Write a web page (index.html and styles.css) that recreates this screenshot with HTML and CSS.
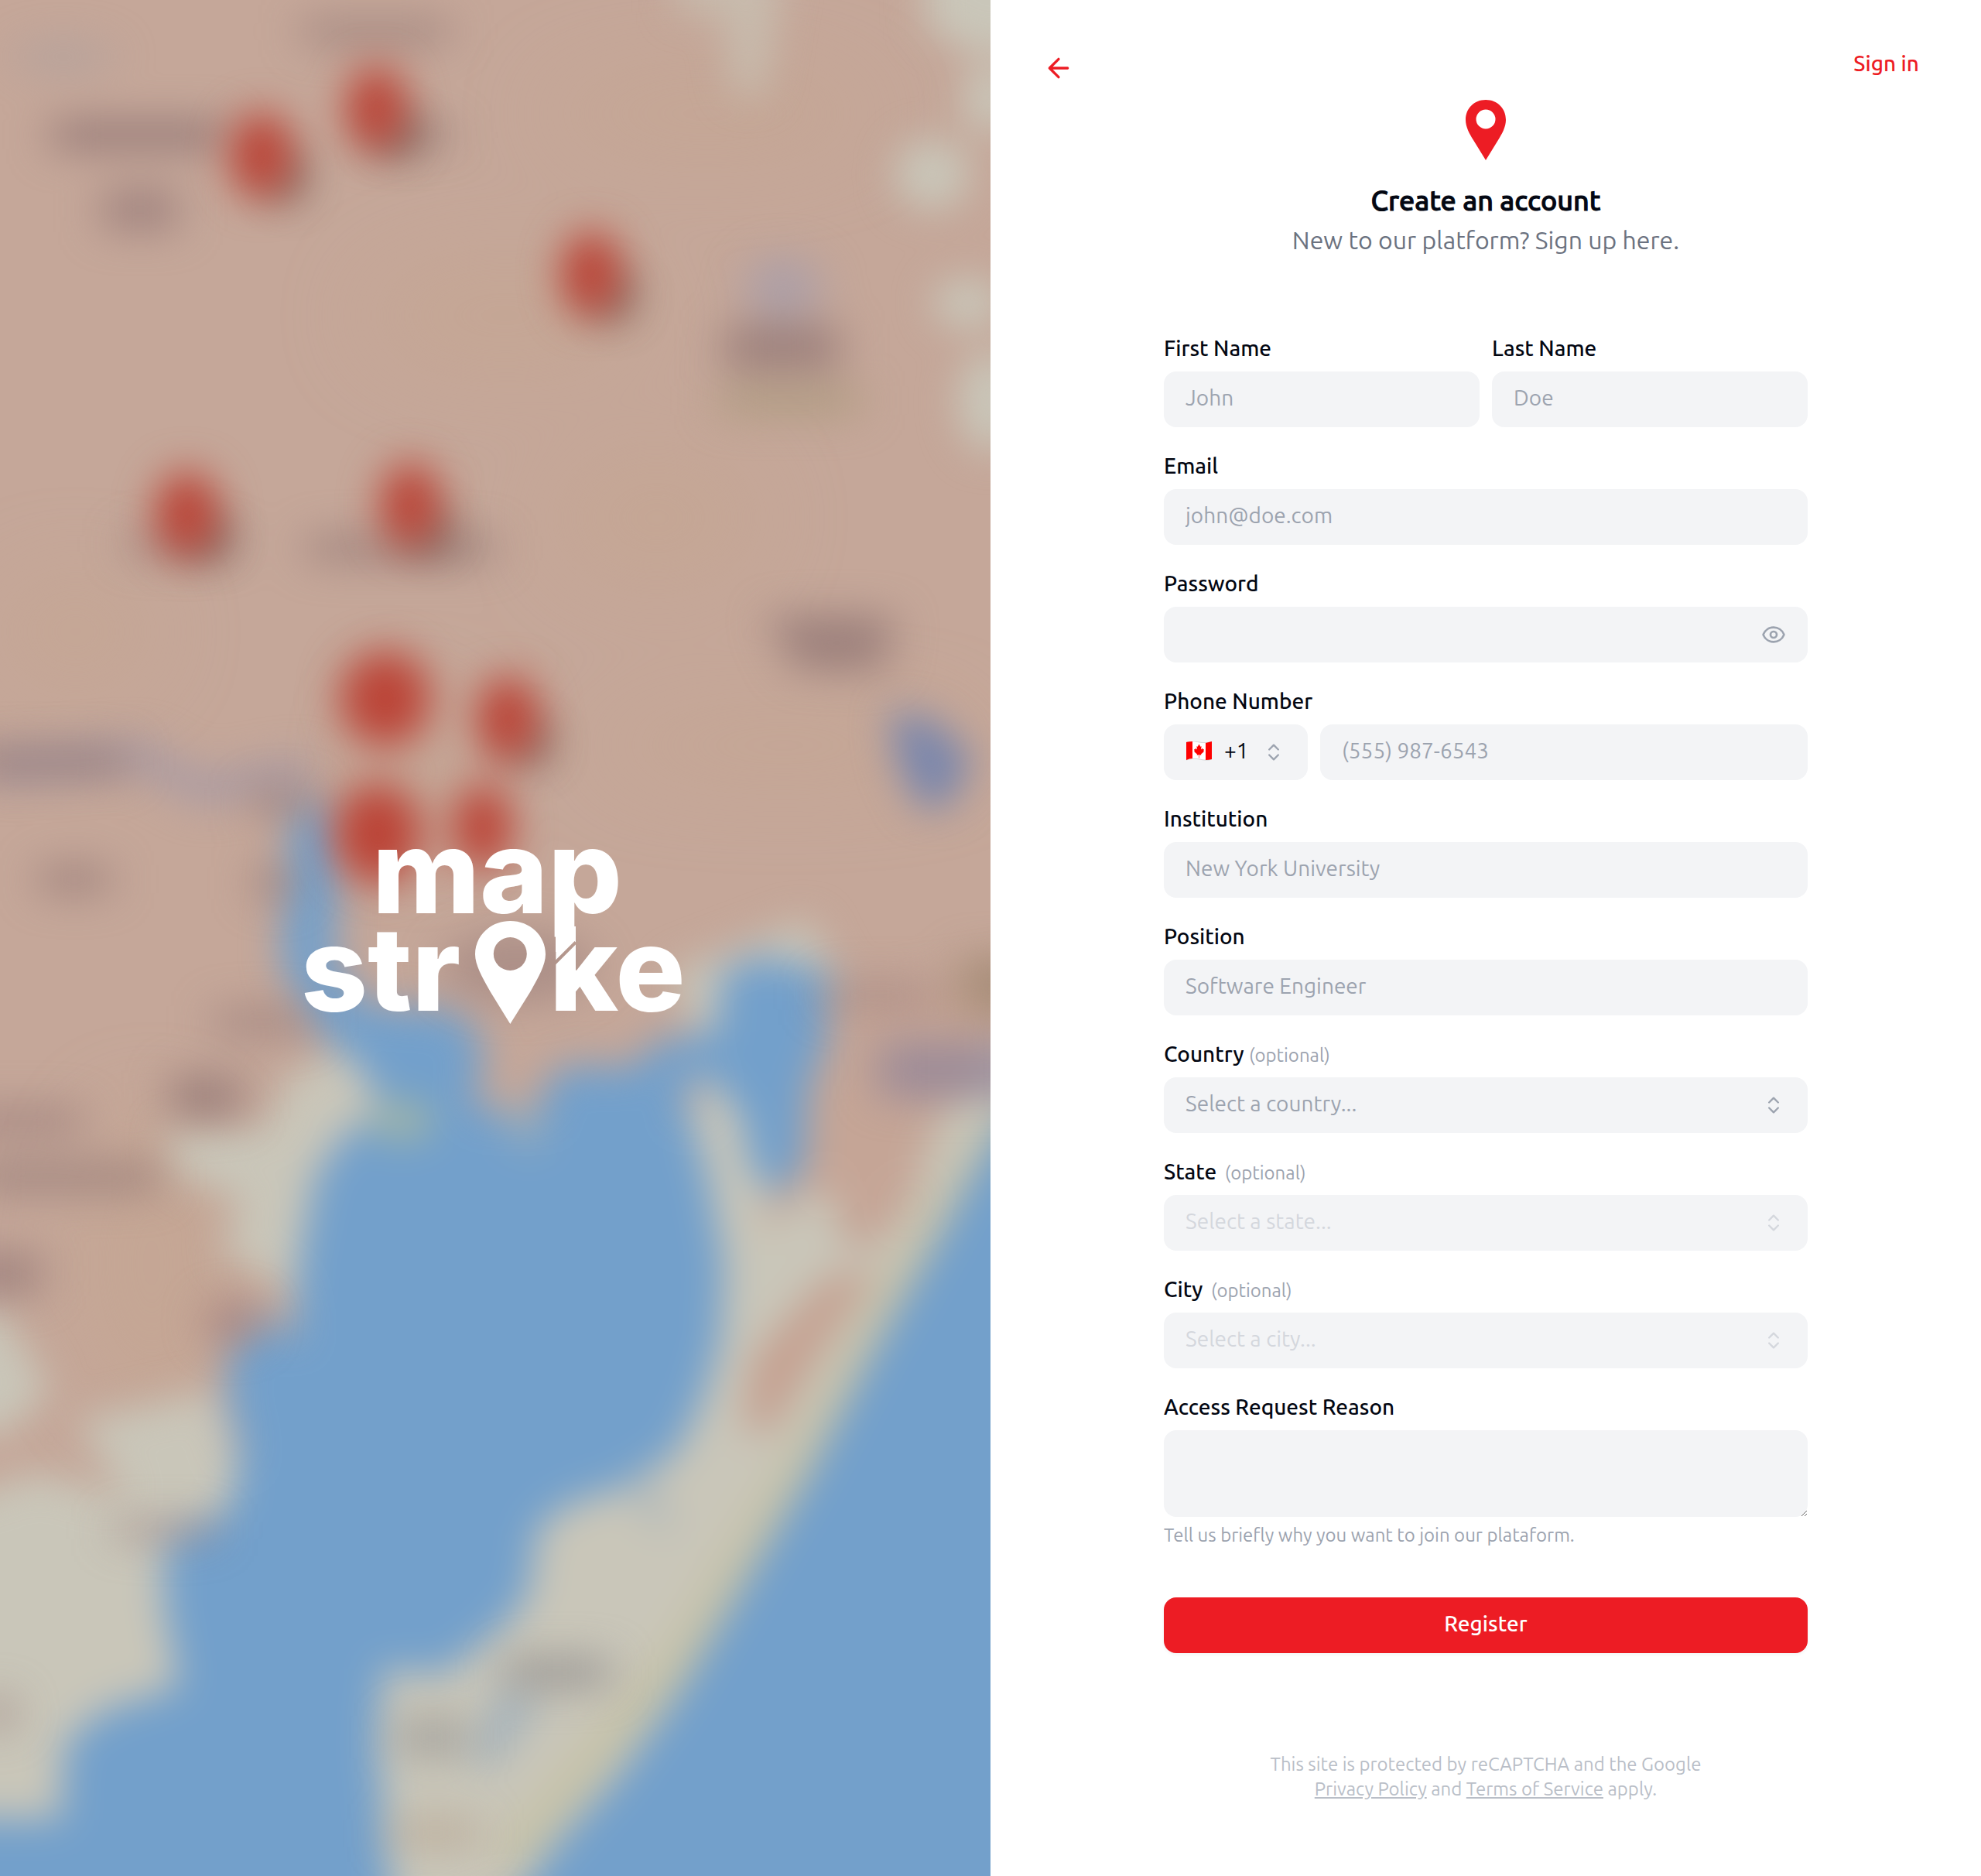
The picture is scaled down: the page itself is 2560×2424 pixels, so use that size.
FILE: index.html
```html
<!DOCTYPE html>
<html lang="en">
<head>
<meta charset="utf-8">
<meta name="viewport" content="width=device-width, initial-scale=1">
<title>Create an account</title>
<link rel="stylesheet" href="styles.css">
</head>
<body>
<div class="page">
  <aside class="hero">
    <svg class="map" viewBox="0 0 784 1485" preserveAspectRatio="xMidYMid slice" aria-hidden="true">
      <defs>
        <filter id="soft" color-interpolation-filters="sRGB" filterUnits="userSpaceOnUse" x="-60" y="-60" width="904" height="1605"><feGaussianBlur stdDeviation="15"/></filter>
        <filter id="label" color-interpolation-filters="sRGB" filterUnits="userSpaceOnUse" x="-60" y="-60" width="904" height="1605"><feGaussianBlur stdDeviation="17 15"/></filter>
        <filter id="pin" color-interpolation-filters="sRGB" filterUnits="userSpaceOnUse" x="-60" y="-60" width="904" height="1605"><feGaussianBlur stdDeviation="16"/></filter>
        <filter id="wide" color-interpolation-filters="sRGB" filterUnits="userSpaceOnUse" x="-60" y="-60" width="904" height="1605"><feGaussianBlur stdDeviation="36"/></filter>
      </defs>
      <rect x="-60" y="-60" width="904" height="1605" fill="#c5a799"/>
      <g filter="url(#wide)" fill="#c5a690" opacity=".5">
        <ellipse cx="400" cy="250" rx="110" ry="40"/><ellipse cx="560" cy="90" rx="130" ry="30"/><ellipse cx="520" cy="410" rx="80" ry="50"/>
        <ellipse cx="60" cy="500" rx="60" ry="40"/><ellipse cx="620" cy="590" rx="150" ry="24"/><ellipse cx="120" cy="1000" rx="60" ry="120"/>
        <ellipse cx="330" cy="610" rx="30" ry="60"/>
      </g>
      <g filter="url(#soft)">
        <!-- marsh and beaches -->
        <g fill="#c9c6b9">
          <path d="M732-60H850V42H765L732 20Z"/><ellipse cx="784" cy="78" rx="22" ry="28"/><ellipse cx="738" cy="138" rx="30" ry="28"/>
          <ellipse cx="766" cy="240" rx="28" ry="20"/><ellipse cx="784" cy="318" rx="26" ry="40"/>
          <path d="M535-30H622L605 76H580L572 10H535Z" opacity=".65"/>
          <path d="M225 855L275 825 330 870 310 920 260 1000 240 1080 225 1020 175 990 190 950 140 930 130 895 210 892Z"/>
          <path d="M-60 1035H0L40 1100 5 1135H-60Z"/>
          <path d="M60 1125L170 1100 200 1200 190 1360 20 1500H-60V1195L30 1165 100 1185Z"/>
          <path d="M530 770L640 728 672 790 655 850 640 950 575 1010 545 900 560 840Z"/>
          <path d="M784 830L844 830V900L720 1040 600 1270 440 1485 300 1545 290 1300 440 1170 560 1050 580 930 640 930 670 950 720 960 740 870Z"/>
        </g>
        <path d="M655 790L850 760 784 840 745 880 720 950 695 985 670 990 655 935 600 975 630 900Z" fill="#c5a596"/>
        <path d="M655 1010L695 1005 650 1070 610 1135 588 1130 595 1075Z" fill="#c5a191"/>
        <path d="M800 885L720 1005 640 1150 540 1310 400 1475" fill="none" stroke="#c6c2a8" stroke-width="30"/>
        <path d="M844 820L784 905 740 985 690 1072 640 1168 590 1252 540 1336 490 1405 440 1460 375 1545H844Z" fill="#73a0cb"/>
        <!-- river feeding the bay -->
        <path d="M-10 608L110 598 160 625 245 610" fill="none" stroke="#aa9ba3" stroke-width="24"/>
        <!-- bay -->
        <path d="M232 635L264 640 268 700 264 760 290 795 365 800 385 835 374 868 405 892 428 885 430 858 452 843 500 845 520 824 568 816 570 772 600 756 658 770 653 830 640 860 636 925 612 948 592 920 588 885 560 850 540 862 560 930 573 1000 570 1060 555 1110 535 1150 490 1178 450 1190 425 1210 418 1262 395 1290 350 1325 303 1320 298 1380 314 1545H-60V1440H48L52 1380 80 1355 142 1335 130 1270 130 1220 182 1195 190 1150 178 1100 185 1060 205 1040 232 1060 236 1000 250 930 275 895 300 880 290 850 245 810 222 760Z" fill="#73a0cb"/>
        <path d="M704 562L740 570 770 600 752 638 728 640 710 605Z" fill="#7b87ac"/>
        <path d="M390 870L425 880 430 910 408 905Z" fill="#97abba"/>
        <ellipse cx="318" cy="887" rx="26" ry="16" fill="#9fb4a8"/>
        <path d="M370 1390L400 1330 430 1345 390 1400Z" fill="#a5b3bc"/>
        <path d="M512 1165L533 1215 502 1190Z" fill="#a5b3bc"/>
      </g>
      <!-- place names -->
      <g filter="url(#label)" fill="#957977">
        <rect x="240" y="14" width="115" height="22" opacity=".6"/>
        <rect x="42" y="94" width="135" height="26" opacity=".85"/>
        <rect x="82" y="148" width="58" height="36" opacity=".7"/>
        <rect x="300" y="97" width="56" height="20" opacity=".6"/>
        <rect x="574" y="256" width="90" height="38" opacity=".8"/>
        <rect x="570" y="304" width="110" height="26" fill="#aa987c" opacity=".7"/>
        <ellipse cx="620" cy="228" rx="30" ry="26" fill="#a89eaa" opacity=".8"/>
        <rect x="100" y="420" width="86" height="22" opacity=".5"/>
        <rect x="244" y="422" width="146" height="24" opacity=".65"/>
        <path d="M608 486H707L700 532H630Z" opacity=".8"/>
        <rect x="-30" y="590" width="130" height="26" opacity=".65"/>
        <rect x="32" y="683" width="54" height="26" opacity=".65"/>
        <rect x="200" y="622" width="45" height="26" opacity=".55"/><rect x="203" y="685" width="28" height="28" opacity=".65"/>
        <rect x="170" y="795" width="75" height="28" opacity=".5"/>
        <rect x="136" y="850" width="54" height="36" opacity=".8"/>
        <rect x="-30" y="874" width="95" height="26" opacity=".55"/><rect x="-20" y="918" width="145" height="28" opacity=".6"/>
        <rect x="-30" y="990" width="62" height="36" opacity=".7"/>
        <ellipse cx="184" cy="1046" rx="20" ry="18" fill="#a67f7b" opacity=".8"/>
        <rect x="90" y="1200" width="80" height="22" opacity=".4"/>
        <rect x="650" y="775" width="90" height="26" opacity=".4"/><rect x="696" y="824" width="120" height="46" fill="#928498" opacity=".75"/>
        <rect x="760" y="756" width="60" height="48" fill="#9d856d" opacity=".7"/>
        <rect x="400" y="1310" width="82" height="28" fill="#8e8b8b" opacity=".65"/>
        <rect x="315" y="1358" width="55" height="34" fill="#8e8b8b" opacity=".5"/><rect x="310" y="1438" width="70" height="26" fill="#b39d88" opacity=".5"/>
        <ellipse cx="-2" cy="1356" rx="14" ry="18" opacity=".5"/>
        <ellipse cx="410" cy="765" rx="60" ry="30" opacity=".5"/>
        <ellipse cx="50" cy="45" rx="40" ry="14" fill="#aa9f9f" opacity=".5"/>
      </g>
      <!-- pin shadows, then pins -->
      <g filter="url(#pin)" fill="#6c5852" opacity=".75">
        <ellipse cx="226" cy="140" rx="16" ry="20"/><ellipse cx="315" cy="106" rx="17" ry="18"/><ellipse cx="485" cy="234" rx="17" ry="20"/>
        <ellipse cx="164" cy="424" rx="17" ry="18"/><ellipse cx="341" cy="420" rx="17" ry="18"/><ellipse cx="420" cy="588" rx="16" ry="18"/>
      </g>
      <g filter="url(#pin)" fill="#bb4437">
        <ellipse cx="298" cy="86" rx="24" ry="34"/><ellipse cx="207" cy="123" rx="25" ry="34"/><ellipse cx="468" cy="217" rx="24" ry="34"/>
        <ellipse cx="148" cy="407" rx="25" ry="34"/><ellipse cx="325" cy="400" rx="24" ry="34"/><ellipse cx="402" cy="569" rx="25" ry="34"/>
        <ellipse cx="382" cy="655" rx="24" ry="34"/><ellipse cx="305" cy="553" rx="36" ry="38"/><ellipse cx="299" cy="660" rx="35" ry="40"/>
      </g>
    </svg>
    <svg class="wordmark" viewBox="370 1020 540 384" role="img" aria-label="mapstroke">
      <defs>
        <mask id="cut" maskUnits="userSpaceOnUse" x="370" y="1020" width="540" height="384">
          <rect x="370" y="1020" width="540" height="384" fill="#fff"/>
          <path d="M712 1249.500L744 1217.500" stroke="#000" stroke-width="4"/>
        </mask>
      </defs>
      <g fill="#fff" mask="url(#cut)">
        <text class="wordmark-text" x="481" y="1180">map</text>
        <text class="wordmark-text" x="389" y="1306">str</text>
        <text class="wordmark-text" x="710" y="1306">ke</text>
        <rect x="718" y="1170" width="22" height="60"/>
        <path fill-rule="evenodd" d="M659.300 1190C634 1190 614 1209 614 1233C614 1248 625 1266 634 1282L659.300 1323L685 1282C694 1266 705 1248 705 1233C705 1209 685 1190 659.300 1190ZM659.300 1211A21.500 21.500 0 1 1 659.300 1254A21.500 21.500 0 1 1 659.300 1211Z"/>
      </g>
    </svg>
  </aside>

  <main class="panel">
    <header class="topbar">
      <a class="back" href="#" aria-label="Back">
        <svg class="back-icon" viewBox="0 0 24 24" aria-hidden="true"><path d="m12 19-7-7 7-7M19 12H5"/></svg>
      </a>
      <a class="signin" href="#">Sign in</a>
    </header>

    <div class="content">
      <svg class="brand" viewBox="0 0 52 78" aria-hidden="true">
        <path fill-rule="evenodd" d="M26 0C11 0 0 11 0 26C0 35 5 44 10 52L26 78L42 52C47 44 52 35 52 26C52 11 41 0 26 0ZM26 12.500A12.500 12.500 0 1 1 26 37.500A12.500 12.500 0 1 1 26 12.500Z"/>
      </svg>
      <h1 class="title">Create an account</h1>
      <p class="subtitle">New to our platform? Sign up here.</p>

      <form class="form">
        <div class="row">
          <div class="field">
            <label class="label" for="first">First Name</label>
            <input class="control" id="first" type="text" placeholder="John">
          </div>
          <div class="field">
            <label class="label" for="last">Last Name</label>
            <input class="control" id="last" type="text" placeholder="Doe">
          </div>
        </div>
        <div class="field">
          <label class="label" for="email">Email</label>
          <input class="control" id="email" type="email" placeholder="john@doe.com">
        </div>
        <div class="field">
          <label class="label" for="password">Password</label>
          <div class="box">
            <input class="control" id="password" type="password">
            <button class="reveal" type="button" aria-label="Show password">
              <svg class="eye" viewBox="0 0 24 24" aria-hidden="true"><path d="M2.062 12.348a1 1 0 0 1 0-.696 10.750 10.750 0 0 1 19.876 0 1 1 0 0 1 0 .696 10.750 10.750 0 0 1-19.876 0"/><circle cx="12" cy="12" r="3"/></svg>
            </button>
          </div>
        </div>
        <div class="field">
          <label class="label" for="phone">Phone Number</label>
          <div class="phone">
            <div class="box dial">
              <select class="control code" aria-label="Country code"><option>+1</option></select>
              <svg class="flag" viewBox="0 0 33 25" aria-hidden="true">
                <path d="M0 1C6-1 11 0 17 1S28 2 33 0V23C28 25 22 24 17 23S6 22 0 24Z" fill="#fff" stroke="#d5d5d5"/>
                <path d="M0 1Q4 0 8 0V22Q4 22 0 24ZM25 2Q29 1 33 0V23Q29 24 25 24Z" fill="#fe0000"/>
                <path d="M16.500 3.500L18.300 6.800 19.600 6.200 19 10.500 21 8.800 21.400 10.200 23 10.200 22.300 12.500 22.800 13.200 19 16.500 19.300 17.800 16.800 17.300V21.500H16.200V17.300L13.700 17.800 14 16.500 10.200 13.200 10.700 12.500 10 10.200 11.600 10.200 12 8.800 14 10.500 13.400 6.200 14.700 6.800Z" fill="#fe0000"/>
              </svg>
              <svg class="chevrons" viewBox="0 0 24 24" aria-hidden="true"><path d="m7 15 5 5 5-5M7 9l5-5 5 5"/></svg>
            </div>
            <input class="control" id="phone" type="tel" placeholder="(555) 987-6543">
          </div>
        </div>
        <div class="field">
          <label class="label" for="institution">Institution</label>
          <input class="control" id="institution" type="text" placeholder="New York University">
        </div>
        <div class="field">
          <label class="label" for="position">Position</label>
          <input class="control" id="position" type="text" placeholder="Software Engineer">
        </div>
        <div class="field">
          <label class="label" for="country">Country <span class="optional">(optional)</span></label>
          <div class="box">
            <select class="control" id="country"><option>Select a country...</option></select>
            <svg class="chevrons" viewBox="0 0 24 24" aria-hidden="true"><path d="m7 15 5 5 5-5M7 9l5-5 5 5"/></svg>
          </div>
        </div>
        <div class="field">
          <label class="label" for="state">State <span class="optional spaced">(optional)</span></label>
          <div class="box">
            <select class="control" id="state" disabled><option>Select a state...</option></select>
            <svg class="chevrons muted" viewBox="0 0 24 24" aria-hidden="true"><path d="m7 15 5 5 5-5M7 9l5-5 5 5"/></svg>
          </div>
        </div>
        <div class="field">
          <label class="label" for="city">City <span class="optional spaced">(optional)</span></label>
          <div class="box">
            <select class="control" id="city" disabled><option>Select a city...</option></select>
            <svg class="chevrons muted" viewBox="0 0 24 24" aria-hidden="true"><path d="m7 15 5 5 5-5M7 9l5-5 5 5"/></svg>
          </div>
        </div>
        <div class="field">
          <label class="label" for="reason">Access Request Reason</label>
          <textarea class="control area" id="reason" aria-describedby="hint"></textarea>
          <p class="hint" id="hint">Tell us briefly why you want to join our plataform.</p>
        </div>
        <button class="register" type="submit">Register</button>
      </form>

      <p class="legal">This site is protected by reCAPTCHA and the Google<br><a href="#">Privacy Policy</a> and <a href="#">Terms of Service</a> apply.</p>
    </div>
  </main>
</div>
</body>
</html>
```
FILE: styles.css
```css
*, *::before, *::after { box-sizing: border-box; }

body {
  margin: 0;
  background: #fff;
  color: #030712;
  font-family: Ubuntu, "Noto Sans", sans-serif;
  font-size: 28px;
  line-height: 40px;
}

.page {
  display: grid;
  grid-template-columns: 1fr 1fr;
  min-height: 100vh;
}

.hero {
  position: relative;
  display: flex;
  align-items: center;
  justify-content: center;
  overflow: hidden;
  background: #c5a799;
}
.map { position: absolute; inset: 0; width: 100%; height: 100%; }
.wordmark { position: relative; width: 540px; max-width: 100%; }
.wordmark-text { font: 800 150px Inter, sans-serif; }

.panel { display: flex; flex-direction: column; }

.topbar {
  display: flex;
  justify-content: space-between;
  align-items: flex-start;
  padding: 62px 80px 0 68px;
}
.back { display: flex; padding-top: 6px; color: #ed1c24; }
.back-icon {
  width: 40px; height: 40px;
  fill: none; stroke: currentColor; stroke-width: 2;
  stroke-linecap: round; stroke-linejoin: round;
}
.signin { color: #ed1c24; font-weight: 500; text-decoration: none; }

.content {
  display: flex;
  flex-direction: column;
  align-items: center;
  width: 65%;
  margin: 0 auto;
  padding-top: 21px;
}
.brand { width: 52px; height: 78px; fill: #ed1c24; }
.title {
  margin: 28px 0 0;
  font-size: 36px;
  font-weight: 500;
  line-height: 48px;
  -webkit-text-stroke: 1px currentColor;
}
.subtitle { margin: 5px 0 0; font-size: 32px; line-height: 44px; color: #6b7280; }

.form {
  display: flex;
  flex-direction: column;
  gap: 36px;
  width: 100%;
  margin-top: 104px;
}
.row { display: grid; grid-template-columns: 1fr 1fr; gap: 16px; }
.field { display: flex; flex-direction: column; gap: 16px; min-width: 0; }
.label { line-height: 28px; font-weight: 500; }
.optional { font-size: 24px; font-weight: 400; line-height: 20px; color: #9ca3af; }
.spaced { margin-left: 4px; }

.control {
  display: block;
  width: 100%;
  height: 72px;
  margin: 0;
  padding: 0 28px 4px;
  border: 0;
  border-radius: 16px;
  background: #f3f4f6;
  color: #9ca3af;
  font: inherit;
  appearance: none;
}
input.control { padding-bottom: 6px; }
.control::placeholder { color: #9ca3af; opacity: 1; }
.control:disabled { color: #d4d7dd; opacity: 1; }
.area { height: 112px; padding: 16px 28px; resize: vertical; }

.box { position: relative; }
.chevrons, .eye {
  fill: none; stroke: #9ca3af; stroke-width: 2;
  stroke-linecap: round; stroke-linejoin: round;
}
.chevrons {
  position: absolute;
  top: 22px; right: 30px;
  width: 28px; height: 28px;
  pointer-events: none;
}
.chevrons.muted { stroke: #d4d7dd; }
.reveal {
  position: absolute;
  top: 20px; right: 28px;
  display: flex;
  padding: 0;
  border: 0;
  background: none;
}
.eye { width: 32px; height: 32px; }

.phone { display: grid; grid-template-columns: 186px 1fr; gap: 16px; }
.code { padding: 0 0 4px 78px; color: #030712; }
.flag { position: absolute; top: 22px; left: 29px; width: 33px; height: 25px; pointer-events: none; }

.hint { margin: -8px 0 0; font-size: 24px; line-height: 32px; color: #9ca3af; }

.register {
  height: 72px;
  margin-top: 28px;
  padding: 0 28px 4px;
  border: 0;
  border-radius: 16px;
  background: #ed1c24;
  box-shadow: 0 2px 4px rgb(0 0 0 / 5%);
  color: #fff;
  font: inherit;
  font-weight: 500;
}

.legal {
  margin: 128px 0 96px;
  font-size: 24px;
  line-height: 32px;
  text-align: center;
  color: #b9bec7;
}
.legal a { color: inherit; text-decoration: underline; }
```
